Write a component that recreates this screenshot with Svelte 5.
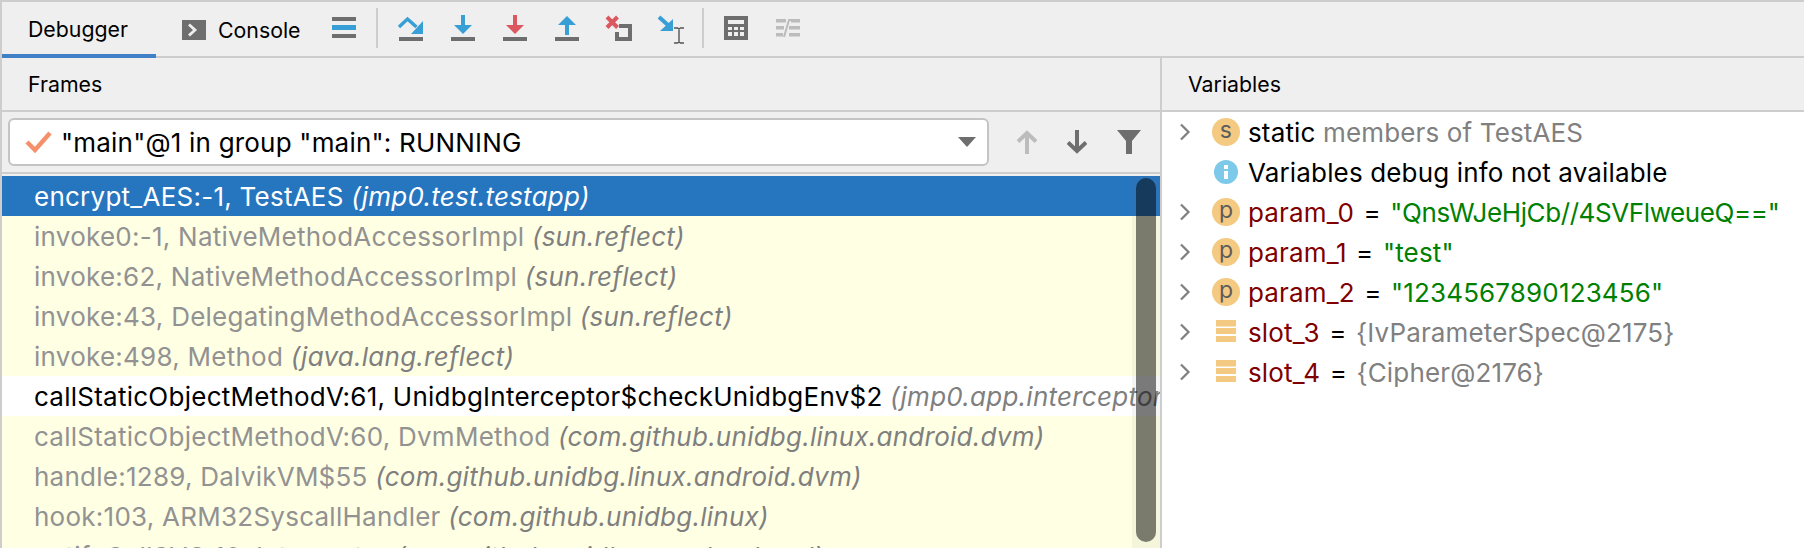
<script>
  const frames = [
    { name: "encrypt_AES:-1, TestAES", pkg: "(jmp0.test.testapp)", kind: "selected" },
    { name: "invoke0:-1, NativeMethodAccessorImpl", pkg: "(sun.reflect)", kind: "lib" },
    { name: "invoke:62, NativeMethodAccessorImpl", pkg: "(sun.reflect)", kind: "lib" },
    { name: "invoke:43, DelegatingMethodAccessorImpl", pkg: "(sun.reflect)", kind: "lib" },
    { name: "invoke:498, Method", pkg: "(java.lang.reflect)", kind: "lib" },
    { name: "callStaticObjectMethodV:61, UnidbgInterceptor$checkUnidbgEnv$2", pkg: "(jmp0.app.interceptor.unidbg)", kind: "user" },
    { name: "callStaticObjectMethodV:60, DvmMethod", pkg: "(com.github.unidbg.linux.android.dvm)", kind: "lib" },
    { name: "handle:1289, DalvikVM$55", pkg: "(com.github.unidbg.linux.android.dvm)", kind: "lib" },
    { name: "hook:103, ARM32SyscallHandler", pkg: "(com.github.unidbg.linux)", kind: "lib" },
    { name: "notifyCallSVC:10, Interpreter", pkg: "(com.github.unidbg.arm.backend)", kind: "lib" },
  ];

  const vars = [
    { icon: "s", name: "static", plain: true, rest: " members of TestAES" },
    { icon: "i", info: "Variables debug info not available" },
    { icon: "p", name: "param_0", str: "\"QnsWJeHjCb//4SVFlweueQ==\"", tight: true },
    { icon: "p", name: "param_1", str: "\"test\"" },
    { icon: "p", name: "param_2", str: "\"1234567890123456\"" },
    { icon: "slot", name: "slot_3", obj: "{IvParameterSpec@2175}" },
    { icon: "slot", name: "slot_4", obj: "{Cipher@2176}" },
  ];
</script>

<div class="window">
  <div class="tabbar">
    <div class="tab active">Debugger</div>
    <div class="tab console">
      <svg width="24" height="20" viewBox="0 0 24 20"><rect width="24" height="20" fill="#6e6e6e" /><path d="M7 4.500l6 5.500-6 5.500" fill="none" stroke="#eee" stroke-width="2.800" /></svg>
      Console
    </div>
    <svg class="tool first" width="24" height="24" viewBox="0 0 24 24"><rect y="1" width="24" height="4" fill="#6e6e6e" /><rect y="9" width="24" height="5" fill="#389fd6" /><rect y="18" width="24" height="4" fill="#6e6e6e" /></svg>
    <span class="sep"></span>
    <div class="tools">
      <svg width="28" height="28" viewBox="0 0 28 28"><path d="M2 13l8.500-8 9 8" fill="none" stroke="#389fd6" stroke-width="3.400" /><path d="M26 7v13H14z" fill="#389fd6" /><rect x="2" y="23" width="24" height="4" fill="#6e6e6e" /></svg>
      <svg width="28" height="28" viewBox="0 0 28 28"><rect x="12" y="1" width="4" height="12" fill="#389fd6" /><path d="M5 11h18l-9 9z" fill="#389fd6" /><rect x="2" y="23" width="24" height="4" fill="#6e6e6e" /></svg>
      <svg width="28" height="28" viewBox="0 0 28 28"><rect x="12" y="1" width="4" height="12" fill="#db5860" /><path d="M5 11h18l-9 9z" fill="#db5860" /><rect x="2" y="23" width="24" height="4" fill="#6e6e6e" /></svg>
      <svg width="28" height="28" viewBox="0 0 28 28"><rect x="12" y="9" width="4" height="12" fill="#389fd6" /><path d="M5 11h18l-9-9z" fill="#389fd6" /><rect x="2" y="23" width="24" height="4" fill="#6e6e6e" /></svg>
      <svg width="28" height="28" viewBox="0 0 28 28"><path d="M14 10h13v17H10v-9h4v5h9V14h-9z" fill="#6e6e6e" /><path d="M2 3l10.500 10.500M12.500 3L2 13.500" stroke="#db5860" stroke-width="4" fill="none" /></svg>
      <svg class="wide" width="28" height="30" viewBox="0 0 28 30"><path d="M2 3l10 9" stroke="#389fd6" stroke-width="4" fill="none" /><path d="M16 5v12H3z" fill="#389fd6" /><path d="M17 14h3.500l1.500 1 1.500-1H27M22 15v13M17 29h3.500l1.500-1 1.500 1H27" stroke="#555" stroke-width="1.400" fill="none" /></svg>
    </div>
    <span class="sep second"></span>
    <div class="tools last">
      <svg width="24" height="24" viewBox="0 0 24 24"><path fill-rule="evenodd" d="M0 0h24v24H0zM4 4v4h16V4zM4 11v3h4v-3zm6 0v3h4v-3zm6 0v3h4v-3zM4 16v4h4v-4zm6 0v4h4v-4zm6 0v4h4v-4z" fill="#6e6e6e" /></svg>
      <svg width="24" height="24" viewBox="0 0 24 24"><path d="M0 3h10v3.500H0zM0 10h8v3.500H0zM0 17h7v3.500H0zM15 3h9v3.500h-9zM13 10h11v3.500H13zM13 17h11v3.500H13z" fill="#bcbcbc" /><path d="M8 21L13 4h4" stroke="#bcbcbc" stroke-width="2" fill="none" /></svg>
    </div>
  </div>

  <div class="panels">
    <section class="frames">
      <header>Frames</header>
      <div class="combo-row">
        <div class="combo">
          <svg width="28" height="24" viewBox="0 0 28 24"><path d="M2 12l8 8L25 3" fill="none" stroke="#f4916a" stroke-width="4.400" /></svg>
          <span class="combo-text">"main"@1 in group "main": RUNNING</span>
          <span class="caret"></span>
        </div>
        <div class="nav">
          <svg width="20" height="24" viewBox="0 0 20 24"><path d="M10 24V3M1 11.500l9-8.500 9 8.500" fill="none" stroke="#bcbcbc" stroke-width="4" /></svg>
          <svg width="20" height="24" viewBox="0 0 20 24"><path d="M10 0v21M1 12.500l9 8.500 9-8.500" fill="none" stroke="#6e6e6e" stroke-width="4" /></svg>
          <svg width="24" height="24" viewBox="0 0 24 24"><path d="M0 0h24L15 11v13H9V11z" fill="#6e6e6e" /></svg>
        </div>
      </div>
      <div class="list">
        {#each frames as f}
          <div class="row {f.kind}">
            <span class="name">{f.name}</span> <em>{f.pkg}</em>
          </div>
        {/each}
        <div class="track"></div>
        <div class="scrollbar"></div>
      </div>
    </section>

    <section class="vars">
      <header>Variables</header>
      <div class="tree">
        {#each vars as v}
          <div class="var">
            <span class="chevron">
              {#if v.icon !== "i"}
                <svg width="12" height="18" viewBox="0 0 12 18"><path d="M2 1.500l7.500 7.500-7.500 7.500" fill="none" stroke="#7f7f7f" stroke-width="2.200" /></svg>
              {/if}
            </span>
            <span class="icon">
              {#if v.icon === "i"}
                <span class="info">
                  <svg width="24" height="24" viewBox="0 0 24 24"><circle cx="12" cy="12" r="12" fill="#7cc9ea" /><path d="M10 5h4v4h-4zM10 11h4v8h-4z" fill="#fff" /></svg>
                </span>
              {:else if v.icon === "slot"}
                <svg width="20" height="24" viewBox="0 0 20 24"><path d="M0 0h20v6.500H0zM0 8h20v6H0zM0 16h20v6H0z" fill="#f4c982" /></svg>
              {:else}
                <span class="badge">{v.icon}</span>
              {/if}
            </span>
            {#if v.info}
              <span class="black">{v.info}</span>
            {:else if v.plain}
              <span class="black">{v.name}</span><span class="gray">{v.rest}</span>
            {:else}
              <span class="red">{v.name}</span><span class="black eq">{" = "}</span>{#if v.str}<span class="green" class:tight={v.tight}>{v.str}</span>{:else}<span class="gray">{v.obj}</span>{/if}
            {/if}
          </div>
        {/each}
      </div>
    </section>
  </div>
</div>

<style>
  :global(body) {
    margin: 0;
    background: #fff;
  }

  .window {
    width: 1804px;
    height: 548px;
    overflow: hidden;
    box-sizing: border-box;
    border-top: 2px solid #cdcdcd;
    border-left: 2px solid #cdcdcd;
    font-family: Inter, "Liberation Sans", sans-serif;
    font-size: 21.3px;
    color: #000;
    background: #fff;
    position: relative;
  }

  .window::before {
    content: "";
    position: absolute;
    left: 50px;
    top: -2px;
    width: 170px;
    height: 2px;
    background: #3f80c6;
  }

  .tabbar {
    height: 56px;
    box-sizing: border-box;
    display: flex;
    align-items: center;
    background: #efefef;
    border-bottom: 2px solid #cdcdcd;
  }

  .tab {
    height: 54px;
    display: flex;
    align-items: center;
    padding: 0 26px;
    box-sizing: border-box;
    white-space: nowrap;
  }

  .tab.active {
    width: 154px;
    margin-bottom: -2px;
    height: 56px;
    padding-top: 2px;
    border-bottom: 4px solid #3f80c6;
  }

  .console {
    padding: 2px 0 0 26px;
    gap: 12px;
  }

  .tool.first {
    margin-left: 31px;
    margin-bottom: 2px;
  }

  .sep {
    width: 2px;
    height: 40px;
    background: #cdcdcd;
    margin: 0 19px 2px 20px;
    flex: none;
  }

  .sep.second {
    margin: 0 20px 2px 17px;
  }

  .tools {
    display: flex;
    align-items: flex-start;
    gap: 24px;
    height: 30px;
    margin-bottom: 0;
  }

  .tools.last {
    gap: 28px;
    height: 24px;
    margin-bottom: 2px;
  }

  .panels {
    display: flex;
    height: 490px;
  }

  header {
    height: 54px;
    box-sizing: border-box;
    display: flex;
    align-items: center;
    padding-left: 26px;
    background: #efefef;
    border-bottom: 2px solid #cdcdcd;
  }

  .frames {
    width: 1158px;
    flex: none;
    background: #efefef;
    border-right: 2px solid #cdcdcd;
  }

  .combo-row {
    height: 62px;
    box-sizing: border-box;
    display: flex;
    align-items: center;
    padding: 0 8px 0 6px;
    border-bottom: 2px solid #cdcdcd;
  }

  .combo {
    width: 981px;
    height: 48px;
    box-sizing: border-box;
    flex: none;
    background: #fff;
    border: 2px solid #c4c4c4;
    border-radius: 6px;
    display: flex;
    align-items: center;
    padding: 0 11px 0 15px;
    font-size: 26px;
    letter-spacing: 0.2px;
  }

  .combo-text {
    margin-left: 8px;
    flex: 1;
    white-space: nowrap;
  }

  .caret {
    width: 0;
    height: 0;
    border-left: 9px solid transparent;
    border-right: 9px solid transparent;
    border-top: 10px solid #6e6e6e;
  }

  .nav {
    display: flex;
    gap: 30px;
    margin-left: 28px;
  }

  .list {
    position: relative;
    height: 374px;
    overflow: hidden;
    padding-top: 2px;
    box-sizing: border-box;
    font-size: 26px;
    letter-spacing: 0.25px;
  }

  .row {
    height: 40px;
    line-height: 42px;
    padding-left: 32px;
    white-space: nowrap;
    overflow: hidden;
    color: #929292;
    background: #ffffe4;
  }

  .row em {
    color: #7f7f7f;
  }

  .row.selected {
    background: #2675bf;
    color: #fff;
  }

  .row.selected em {
    color: #fff;
  }

  .row.user {
    background: #fff;
    color: #000;
  }

  .track {
    position: absolute;
    right: 0;
    top: 2px;
    bottom: 0;
    width: 28px;
    background: rgba(120, 120, 120, 0.07);
  }

  .scrollbar {
    position: absolute;
    right: 4px;
    top: 4px;
    height: 364px;
    width: 20px;
    border-radius: 10px;
    background: rgba(0, 0, 0, 0.5);
  }

  .vars {
    flex: 1;
    min-width: 0;
  }

  .tree {
    font-size: 26px;
    letter-spacing: 0.15px;
  }

  .var {
    height: 40px;
    display: flex;
    align-items: center;
    white-space: pre;
  }

  .chevron {
    width: 12px;
    margin-left: 17px;
    display: flex;
  }

  .icon {
    width: 28px;
    height: 28px;
    margin: 0 8px 0 21px;
    display: flex;
    align-items: center;
    justify-content: center;
  }

  .badge {
    width: 28px;
    height: 28px;
    border-radius: 50%;
    background: #f4c982;
    color: #5c5c5c;
    font-size: 23px;
    line-height: 25px;
    text-align: center;
  }

  .info {
    width: 24px;
    height: 24px;
    display: flex;
  }

  .eq {
    margin: 0 2px;
  }

  .tight {
    letter-spacing: -0.4px;
  }

  .black {
    color: #000;
  }

  .gray {
    color: #808080;
  }

  .red {
    color: #7f0000;
  }

  .green {
    color: #008000;
  }
</style>
